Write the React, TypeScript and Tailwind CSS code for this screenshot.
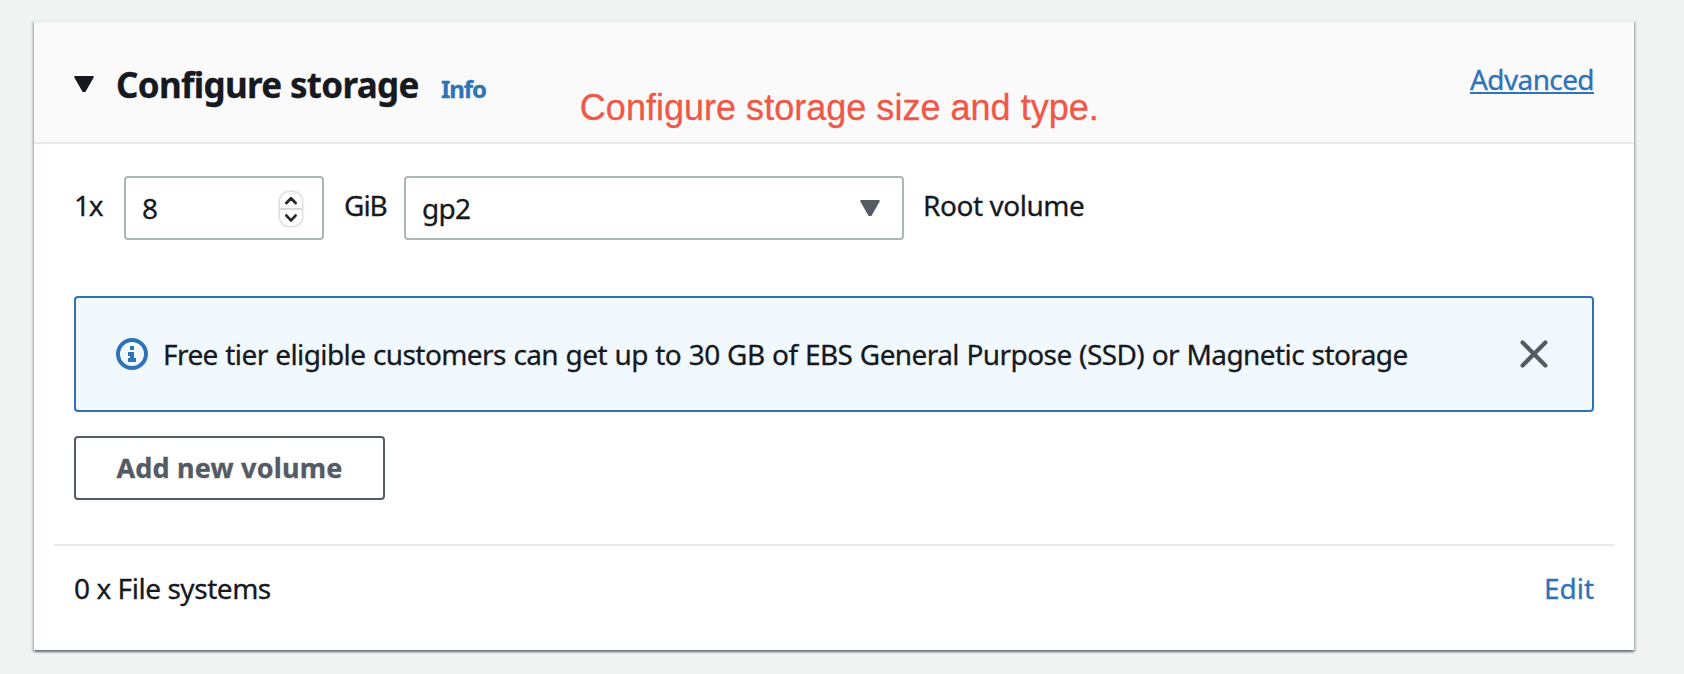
import type { ReactNode } from "react";

function Caret({ className }: { className: string }) {
  return (
    <svg viewBox="0 0 20 16" className={className} fill="currentColor" stroke="currentColor" strokeWidth="2" strokeLinejoin="round">
      <path d="M1.2 1H18.8L10.8 15H9.2Z" />
    </svg>
  );
}

function Stepper() {
  return (
    <span className="mt-[2px] flex h-[34px] w-[22px] flex-col overflow-hidden rounded-[9px] bg-white text-[#26282b] shadow-[0_0_3px_0_rgba(0,0,0,0.4)]">
      <svg viewBox="0 0 22 16" className="h-4 w-[22px]" fill="none" stroke="currentColor" strokeWidth="2.8" strokeLinecap="round" strokeLinejoin="round">
        <path d="M6.4 11L11 6.2L15.6 11" />
      </svg>
      <span className="h-0.5 bg-[#dadada]" />
      <svg viewBox="0 0 22 16" className="h-4 w-[22px]" fill="none" stroke="currentColor" strokeWidth="2.8" strokeLinecap="round" strokeLinejoin="round">
        <path d="M6.4 5.6L11 10.4L15.6 5.6" />
      </svg>
    </span>
  );
}

function InfoIcon() {
  return (
    <svg viewBox="0 0 32 32" className="h-8 w-8 shrink-0 text-[#2e73b8]">
      <circle cx="16" cy="16" r="14" fill="none" stroke="currentColor" strokeWidth="4" />
      <path d="M14 8h4v4h-4zM12 14h6v6h2v4h-8v-4h2v-2h-2z" fill="currentColor" />
    </svg>
  );
}

function Field({ className, children }: { className: string; children: ReactNode }) {
  return (
    <div className={`flex h-16 items-center justify-between rounded-[4px] border-2 border-[#aab7b8] bg-white ${className}`}>
      {children}
    </div>
  );
}

export default function App() {
  return (
    <div className="h-[674px] w-[1684px] overflow-hidden bg-[#f1f3f3] pl-[34px] pt-5 font-['Noto_Sans',sans-serif] text-[28px] leading-10 tracking-[-0.45px] text-[#16191f] [-webkit-text-stroke-width:0.3px]">
      <section className="flex h-[630px] w-[1600px] flex-col border-t-2 border-[#eaeded] bg-white shadow-[0_2px_2px_0_rgba(0,28,36,0.4),2px_2px_2px_0_rgba(0,28,36,0.16),-2px_2px_2px_0_rgba(0,28,36,0.16)]">
        <header className="flex h-[122px] shrink-0 items-start border-b-2 border-[#eaeaea] bg-[#fafafa] pr-10">
          <Caret className="ml-10 mt-[54px] h-4 w-5" />
          <div className="ml-[22px] mt-[38px] flex items-baseline leading-[50px]">
            <h2 className="w-[325px] whitespace-nowrap text-[35px] font-bold tracking-[-0.7px]">Configure storage</h2>
            <a className="text-[24px] font-bold tracking-[-1.1px] text-[#2e73b8]">Info</a>
          </div>
          <p className="ml-[94px] mt-[66px] whitespace-nowrap font-['Liberation_Sans',sans-serif] text-[36px] tracking-[0.02px] text-[#ef5747]">
            Configure storage size and type.
          </p>
          <a className="ml-auto mt-[37px] flex h-[35px] flex-col border-b-2 border-[#2e73b8] tracking-[-0.6px] text-[#2e73b8]">Advanced</a>
        </header>

        <div className="mt-8 flex h-16 items-center pl-10">
          <span className="mt-[-6px] w-[50px] tracking-[-1.2px]">1x</span>
          <Field className="w-[200px] pl-4 pr-5">
            <span>8</span>
            <Stepper />
          </Field>
          <span className="mt-[-6px] w-20 pl-5 tracking-[-1px]">GiB</span>
          <Field className="w-[500px] pl-4 pr-[22px]">
            <span className="tracking-[-0.7px]">gp2</span>
            <Caret className="h-4 w-5 text-[#545b64]" />
          </Field>
          <span className="mt-[-6px] pl-[19px]">Root volume</span>
        </div>

        <div className="mx-10 mt-14 flex h-[116px] shrink-0 items-center rounded-[4px] border-2 border-[#2e73b8] bg-[#f2f9fe] pl-10 pr-11">
          <InfoIcon />
          <span className="ml-[15px] whitespace-nowrap pb-px [word-spacing:0.8px] tracking-[-0.58px]">
            Free tier eligible customers can get up to 30 GB of EBS General Purpose (SSD) or Magnetic storage
          </span>
          <svg viewBox="0 0 28 28" className="ml-auto h-7 w-7 text-[#545b64]" fill="none" stroke="currentColor" strokeWidth="4.2" strokeLinecap="round">
            <path d="M2.6 2.6L25.4 25.4M25.4 2.6L2.6 25.4" />
          </svg>
        </div>

        <button className="ml-10 mt-6 flex h-16 w-[311px] shrink-0 items-center justify-center rounded-[4px] border-2 border-[#545b64] pb-px text-[27px] font-bold tracking-[0.2px] text-[#545b64]">
          Add new volume
        </button>

        <div className="mx-5 mt-11 flex justify-between border-t-2 border-[#eaeaea] px-5 pt-[22px]">
          <span>0 x File systems</span>
          <a className="tracking-[-0.05px] text-[#2e73b8]">Edit</a>
        </div>
      </section>
    </div>
  );
}
